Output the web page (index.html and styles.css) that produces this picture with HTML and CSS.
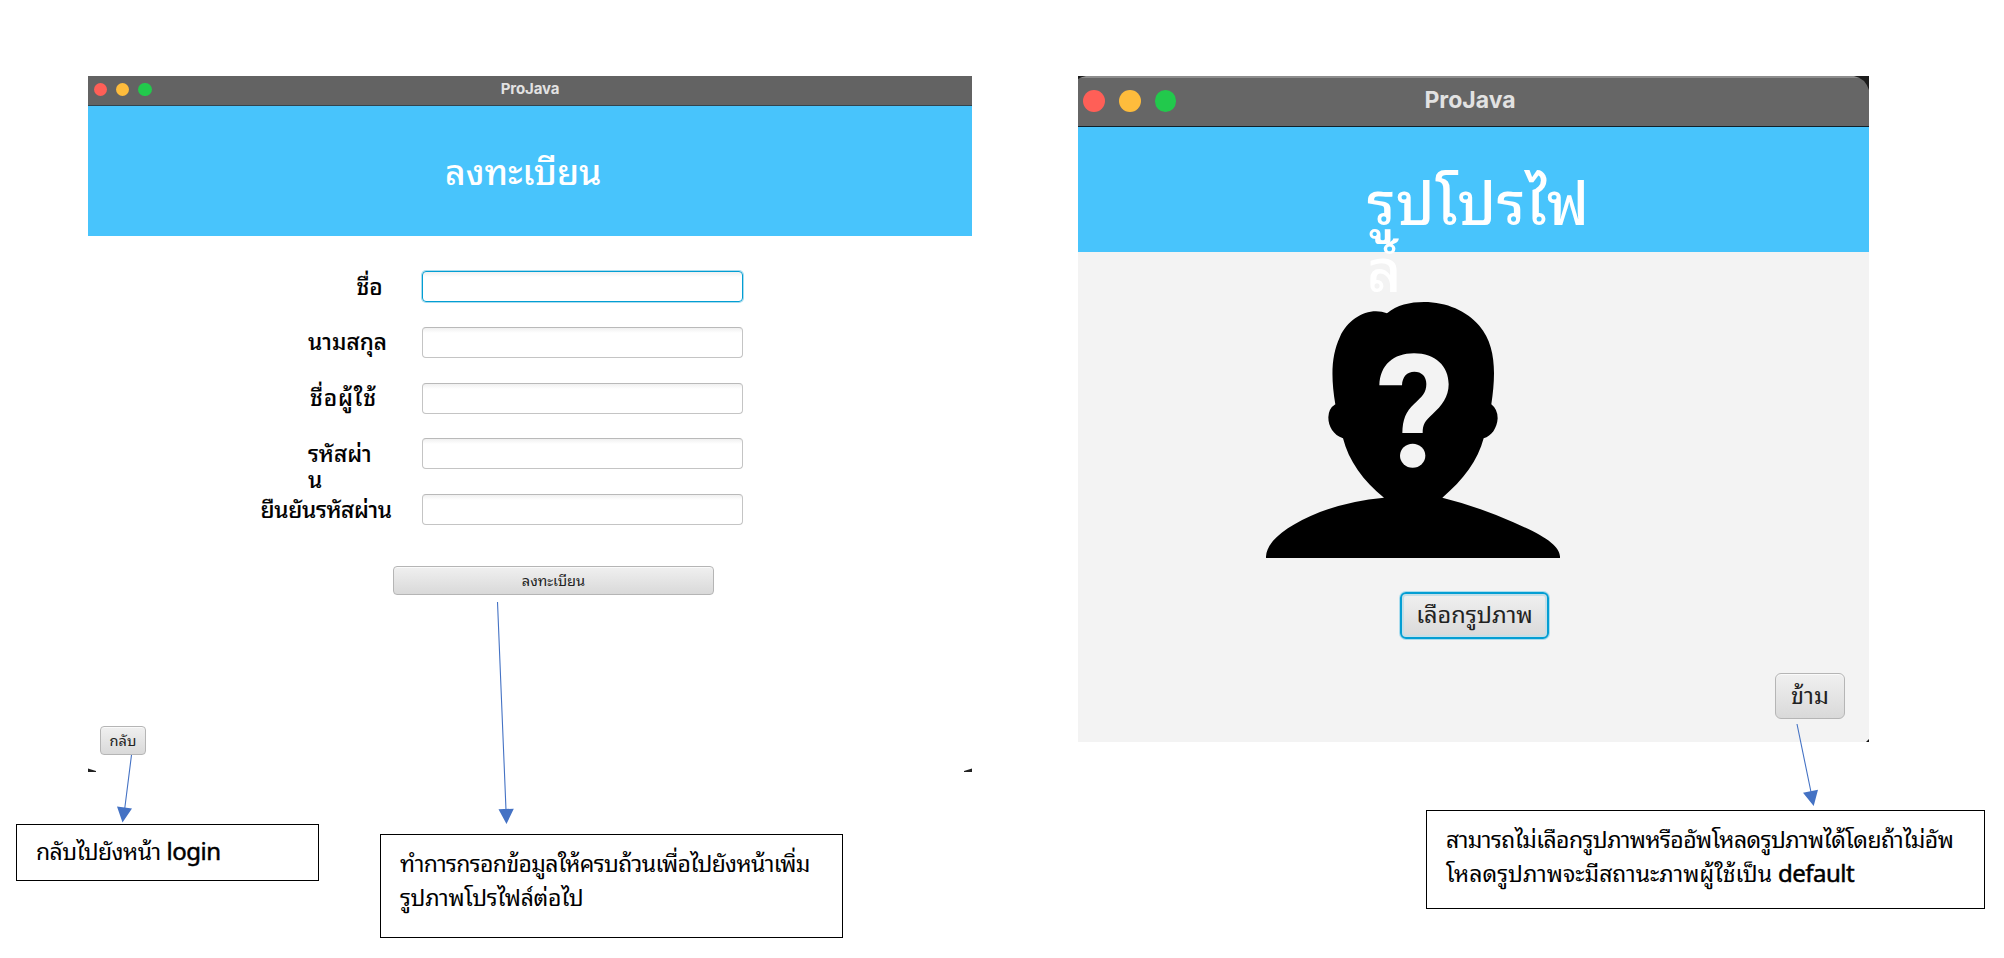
FILE: index.html
```html
<!DOCTYPE html>
<html lang="th">
<head>
<meta charset="utf-8">
<title>ProJava</title>
<link rel="stylesheet" href="styles.css">
</head>
<body>
<main class="canvas">
  <section class="window register">
    <header class="titlebar">
      <div class="lights"><i class="red"></i><i class="amber"></i><i class="green"></i></div>
      <span class="app-name">ProJava</span>
    </header>
    <div class="banner"><h1>ลงทะเบียน</h1></div>
    <form class="form">
      <div class="row"><label class="l-name">ชื่อ</label><div class="field focused"></div></div>
      <div class="row"><label class="l-surname">นามสกุล</label><div class="field"></div></div>
      <div class="row"><label class="l-user">ชื่อผู้ใช้</label><div class="field"></div></div>
      <div class="row"><label class="l-pass">รหัสผ่า<br>น</label><div class="field"></div></div>
      <div class="row"><label class="l-confirm">ยืนยันรหัสผ่าน</label><div class="field"></div></div>
    </form>
    <button class="btn submit"><span>ลงทะเบียน</span></button>
    <button class="btn back"><span>กลับ</span></button>
    <svg class="corners" viewBox="0 0 884 4"><path d="M0 0.500L8 3V4H0zM884 0.500L876 3V4H884z" fill="#222"/></svg>
  </section>

  <section class="window profile">
    <header class="titlebar">
      <div class="lights"><i class="red"></i><i class="amber"></i><i class="green"></i></div>
      <span class="app-name">ProJava</span>
      <svg class="edge" viewBox="0 0 791 18"><path d="M0 0H8Q3 1 0 3zM776 0H791V14Q787 2 776 0z" fill="#1c1c1c"/></svg>
    </header>
    <div class="banner"><h1>รูปโปรไฟ<br>ล์</h1></div>
    <svg class="avatar" viewBox="48 66 882 768">
      <path d="M48 834C46 790 100 740 210 696Q300 662 402 653C340 605 295 540 279 475C250 465 235 440 235 412Q236 385 256 373C242 290 244 225 270 170C290 125 335 94 378 94Q396 94 411 100C440 75 480 66 522 66C590 66 650 93 688 137C738 195 738 280 724 373Q743 388 743 415C741 445 725 468 701 475C684 540 640 600 577 653Q680 678 790 727C890 770 932 800 930 834Z"/>
      <path class="mark" d="M388 316C390 255 430 220 492 220C556 220 596 258 596 313C596 350 575 378 548 402C525 423 518 432 518 459H457C458 418 467 395 493 371C516 350 529 338 529 312C529 289 515 275 493 275C471 275 457 290 456 316Z"/>
      <ellipse class="mark" cx="488" cy="527" rx="38" ry="36"/>
    </svg>
    <button class="btn choose"><span>เลือกรูปภาพ</span></button>
    <button class="btn skip"><span>ข้าม</span></button>
    <svg class="grip" viewBox="0 0 3 3"><path d="M3 0V3H0z" fill="#111"/></svg>
  </section>

  <p class="note note-back"><span class="t1">กลับไปยังหน้า</span> <span class="latin">login</span></p>
  <p class="note note-submit"><span class="t2">ทำการกรอกข้อมูลให้ครบถ้วนเพื่อไปยังหน้าเพิ่ม</span><br><span class="t3">รูปภาพโปรไฟล์ต่อไป</span></p>
  <p class="note note-skip"><span class="t4">สามารถไม่เลือกรูปภาพหรืออัพโหลดรูปภาพได้โดยถ้าไม่อัพ</span><br><span class="t5">โหลดรูปภาพจะมีสถานะภาพผู้ใช้เป็น</span> <span class="latin">default</span></p>

  <svg class="arrows" viewBox="0 0 2004 958">
    <path d="M131.5 755L124.8 808M497.5 602L506 810M1797 724L1811 792"/>
    <path class="head" d="M117 806.5L132 808.5L122.5 822.5zM498.5 809.3L513.8 808.7L506.5 824zM1803 792.7L1818 789.8L1813.7 806z"/>
  </svg>
</main>
</body>
</html>
```
FILE: styles.css
```css
* { box-sizing: border-box; }
body { margin: 0; background: #fff; font-family: "Noto Sans", "Noto Sans Thai Looped", "Noto Sans Thai", sans-serif; color: #000; }
.canvas { position: relative; width: 2004px; height: 958px; overflow: hidden; }
span, label, h1, br { white-space: nowrap; }

.window { position: absolute; top: 76px; display: flex; flex-direction: column; }
.register { left: 88px; width: 884px; height: 696px; }
.profile { left: 1078px; width: 791px; height: 666px; background: #f3f3f3; }

.titlebar { position: relative; display: flex; align-items: center; justify-content: center; flex: none; height: 30px; padding-bottom: 3px; background: #636363; border-bottom: 1px solid #31444e; font: 700 15px/20px Inter, sans-serif; color: #e2e2e2; }
.register .app-name { letter-spacing: -0.1px; }
.lights { position: absolute; left: 5.5px; top: 6.5px; display: flex; gap: 8.8px; }
.lights i { width: 13.5px; height: 13.5px; border-radius: 50%; }
.lights .red { background: #ff5f57; }
.lights .amber { background: #febc3c; }
.lights .green { background: #22c94c; }
.profile .titlebar { height: 51px; padding: 0 7px 4px 0; background: #666; border-top: 2px solid #8d8d8d; border-bottom-color: #10202a; font-size: 23px; }
.profile .lights { left: 5px; top: 12px; gap: 14px; }
.profile .lights i { width: 21.8px; height: 21.8px; }
.edge { position: absolute; left: 0; top: -2px; width: 791px; height: 18px; }

.banner { flex: none; height: 130px; background: #48c4fc; color: #fff; }
.banner h1 { margin: 0; font-weight: 500; }
.register .banner h1 { padding: 36.5px 0 0 357px; font-size: 35.5px; line-height: 56px; }
.profile .banner { height: 125px; }
.profile .banner h1 { padding: 42px 0 0 289px; font-size: 59px; line-height: 67px; letter-spacing: 0.8px; }

.form { display: grid; gap: 24.7px; padding: 35.3px 0 0 172.5px; }
.row { display: flex; height: 31px; }
.row label { flex: none; width: 161px; font-size: 22.6px; line-height: 26px; font-weight: 500; padding-top: 2.5px; -webkit-text-stroke: 0.1px #000; }
.row .l-name { padding-left: 96px; }
.row .l-surname, .row .l-pass { padding-left: 47.5px; }
.row .l-user { padding-left: 49.5px; letter-spacing: 0.9px; }
.row .l-confirm { letter-spacing: -0.35px; }
.field { width: 321px; height: 31px; border: 1px solid #c4c4c4; border-top-color: #b9b9b9; border-radius: 4px; background: linear-gradient(#f0f0f0, #fff 5px); }
.field.focused { border: 1px solid #039ed3; box-shadow: 0 0 0 1px #a9dcee; }

.btn { display: flex; align-items: center; justify-content: center; flex: none; padding: 0; border: 1px solid #b5b5b5; border-radius: 4px; background: linear-gradient(#f0f0f0, #d9d9d9); box-shadow: inset 0 1px #fafafa; font: 400 14.6px/20px "Noto Sans", "Noto Sans Thai Looped", "Noto Sans Thai", sans-serif; color: #222; }
.submit { width: 321px; height: 29px; margin: 41px 0 0 305px; padding-bottom: 2px; }
.back { width: 46px; height: 29px; margin: 131px 0 0 12px; padding-bottom: 2px; }
.corners { width: 884px; height: 4px; margin-top: auto; }
.avatar { flex: none; width: 294px; height: 256px; margin: 50px 0 0 188px; }
.avatar .mark { fill: #f3f3f3; }
.choose { width: 149px; height: 47px; margin: 34px 0 0 322px; padding-bottom: 3px; border: 2px solid #039ed3; border-radius: 6px; box-shadow: 0 0 0 1px #a9dcee, inset 0 0 0 2px #c5dfe8; font-size: 23.5px; }
.skip { width: 70px; height: 46px; margin: 34px 0 0 697px; padding-bottom: 3px; border-width: 1.5px; border-radius: 6px; font-size: 23.5px; }

.grip { width: 3px; height: 3px; margin: auto 0 0 auto; }

.note { position: absolute; margin: 0; border: 1px solid #000; background: #fff; font-size: 23px; line-height: 34px; padding: 10px 19px; }
.note-back { left: 16px; top: 824px; width: 303px; height: 57px; padding-top: 9px; }
.note-submit { left: 380px; top: 834px; width: 463px; height: 104px; padding-top: 11px; }
.note-skip { left: 1426px; top: 810px; width: 559px; height: 99px; padding-top: 11px; }
.t1 { letter-spacing: -0.55px; }
.t2 { letter-spacing: -0.64px; }
.t3 { letter-spacing: -0.27px; }
.t4 { letter-spacing: -0.56px; }
.t5 { letter-spacing: 0; }
.latin { font-size: 24px; letter-spacing: -0.5px; -webkit-text-stroke: 0.5px #000; }

.arrows { position: absolute; inset: 0; width: 2004px; height: 958px; fill: none; stroke: #4472c4; stroke-width: 1.1; }
.arrows .head { fill: #4472c4; stroke: none; }
```
